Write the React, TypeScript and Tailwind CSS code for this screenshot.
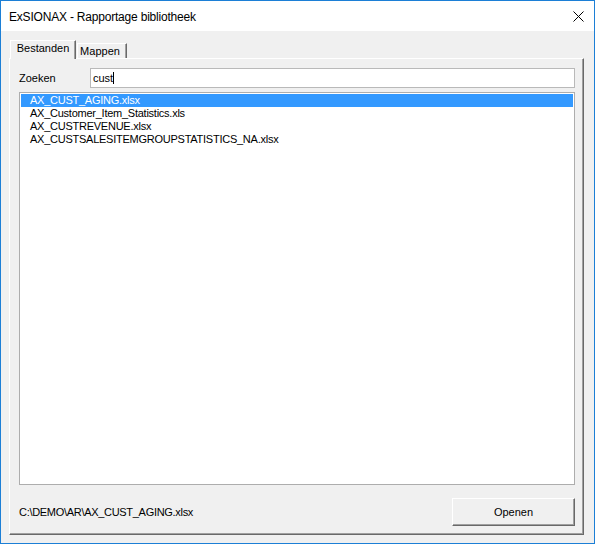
import { useState } from 'react'

const files = [
  'AX_CUST_AGING.xlsx',
  'AX_Customer_Item_Statistics.xls',
  'AX_CUSTREVENUE.xlsx',
  'AX_CUSTSALESITEMGROUPSTATISTICS_NA.xlsx',
]

const font = "font-['Liberation_Sans',Arial,sans-serif]"

export default function App() {
  const [tab, setTab] = useState<'files' | 'folders'>('files')
  const [query, setQuery] = useState('cust')
  const [selected, setSelected] = useState(0)

  return (
    <div className={`w-[595px] h-[544px] flex flex-col border border-[#1c7fd6] bg-[#f0f0f0] text-black ${font}`}>
      {/* title bar */}
      <div className="h-[30px] shrink-0 bg-white flex items-center justify-between pl-[8px] pr-[10px]">
        <span className="text-[12px] leading-none pt-[1px] tracking-[-0.2px]">ExSIONAX - Rapportage bibliotheek</span>
        <svg width="11" height="11" viewBox="0 0 11 11" className="mt-[1px]">
          <path d="M0.5 0.5 L10.5 10.5 M10.5 0.5 L0.5 10.5" stroke="#000" strokeWidth="1" />
        </svg>
      </div>

      <div className="flex-1 flex flex-col pt-[9px] pl-[8px] pr-[10px] pb-[8px]">
        {/* tabs */}
        <div className="h-[18px] flex items-end pl-[1px] text-[11px]">
          <button
            onClick={() => setTab('files')}
            className={
              tab === 'files'
                ? 'relative z-10 w-[66px] h-[19px] -mb-[1px] bg-[#f0f0f0] border-t border-l border-white border-r border-r-[#696969] shadow-[inset_-1px_0_0_#a0a0a0] pb-[3px] leading-none'
                : 'w-[66px] h-[15px] bg-[#f0f0f0] border-t border-l border-white border-r border-r-[#696969] shadow-[inset_-1px_0_0_#a0a0a0] leading-none'
            }
          >
            Bestanden
          </button>
          <button
            onClick={() => setTab('folders')}
            className={
              tab === 'folders'
                ? 'relative z-10 w-[50px] h-[19px] -mb-[1px] ml-[1px] bg-[#f0f0f0] border-t border-l border-white border-r border-r-[#696969] shadow-[inset_-1px_0_0_#a0a0a0] pb-[3px] leading-none'
                : 'w-[50px] h-[15px] ml-[1px] bg-[#f0f0f0] border-t border-l border-white border-r border-r-[#696969] shadow-[inset_-1px_0_0_#a0a0a0] leading-none pr-[4px]'
            }
          >
            Mappen
          </button>
        </div>

        {/* tab page */}
        <div className="flex-1 flex flex-col border-t border-l border-white border-r border-b border-r-[#696969] border-b-[#696969] shadow-[inset_-1px_-1px_0_#a0a0a0] pt-[9px] pl-[9px] pr-[8px] pb-[8px] text-[11px]">
          <div className="flex items-center h-[20px]">
            <label className="w-[71px] shrink-0 leading-none">Zoeken</label>
            <div className="flex-1 h-[20px] bg-white border border-[#b9b9b9] flex items-center pl-[2px]">
              <span className="leading-none">{query}</span>
              <span className="w-[1px] h-[12px] bg-black" />
              <input value={query} onChange={e => setQuery(e.target.value)} className="hidden" />
            </div>
          </div>

          <div className="mt-[4px] flex-1 bg-white border border-[#adadad] p-[1px]">
            {files
              .filter(f => f.toLowerCase().includes(query.toLowerCase()))
              .map((f, i) => (
                <div
                  key={f}
                  onClick={() => setSelected(i)}
                  className={`h-[13px] leading-[13px] pl-[9px] whitespace-nowrap tracking-[-0.25px] ${i === selected ? 'bg-[#3399ff] text-white' : ''}`}
                >
                  {f}
                </div>
              ))}
          </div>

          <div className="mt-[13px] h-[28px] flex items-center justify-between">
            <span className="leading-none tracking-[-0.3px]">C:\DEMO\AR\{files[selected]}</span>
            <button className="w-[123px] h-[28px] bg-[#f0f0f0] border-t border-l border-white border-r border-b border-r-[#696969] border-b-[#696969] shadow-[inset_-1px_-1px_0_#a0a0a0] leading-none">
              Openen
            </button>
          </div>
        </div>
      </div>
    </div>
  )
}
